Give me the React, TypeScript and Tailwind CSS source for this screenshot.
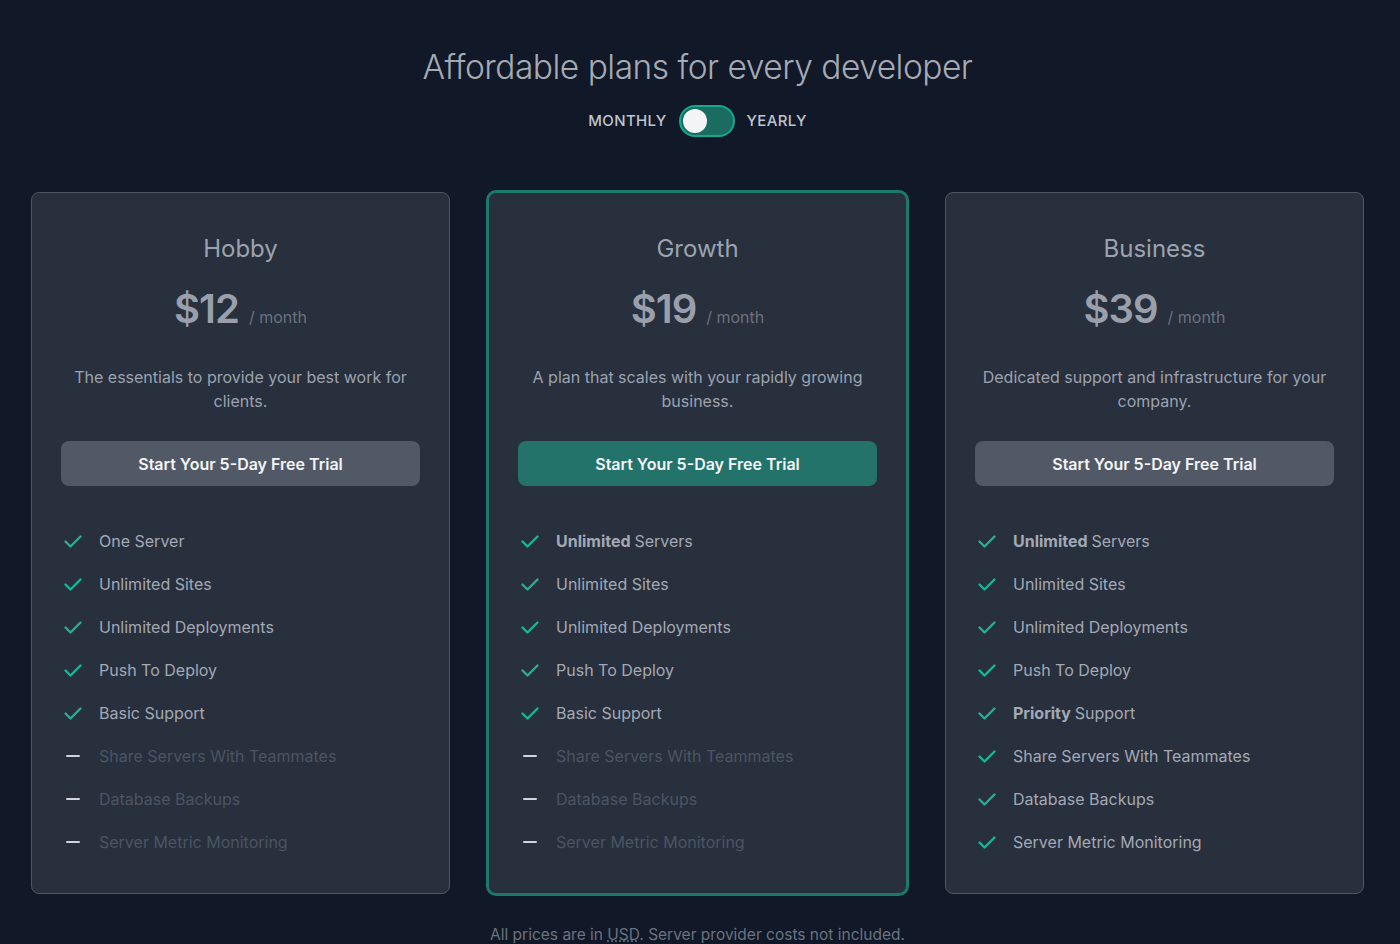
import React, { useState } from 'react';

type Feature = {
  bold?: string;
  text: string;
  included: boolean;
};

type Plan = {
  name: string;
  price: string;
  description: string;
  featured?: boolean;
  features: Feature[];
};

const plans: Plan[] = [
  {
    name: 'Hobby',
    price: '$12',
    description: 'The essentials to provide your best work for clients.',
    features: [
      { text: 'One Server', included: true },
      { text: 'Unlimited Sites', included: true },
      { text: 'Unlimited Deployments', included: true },
      { text: 'Push To Deploy', included: true },
      { text: 'Basic Support', included: true },
      { text: 'Share Servers With Teammates', included: false },
      { text: 'Database Backups', included: false },
      { text: 'Server Metric Monitoring', included: false },
    ],
  },
  {
    name: 'Growth',
    price: '$19',
    description: 'A plan that scales with your rapidly growing business.',
    featured: true,
    features: [
      { bold: 'Unlimited', text: 'Servers', included: true },
      { text: 'Unlimited Sites', included: true },
      { text: 'Unlimited Deployments', included: true },
      { text: 'Push To Deploy', included: true },
      { text: 'Basic Support', included: true },
      { text: 'Share Servers With Teammates', included: false },
      { text: 'Database Backups', included: false },
      { text: 'Server Metric Monitoring', included: false },
    ],
  },
  {
    name: 'Business',
    price: '$39',
    description: 'Dedicated support and infrastructure for your company.',
    features: [
      { bold: 'Unlimited', text: 'Servers', included: true },
      { text: 'Unlimited Sites', included: true },
      { text: 'Unlimited Deployments', included: true },
      { text: 'Push To Deploy', included: true },
      { bold: 'Priority', text: 'Support', included: true },
      { text: 'Share Servers With Teammates', included: true },
      { text: 'Database Backups', included: true },
      { text: 'Server Metric Monitoring', included: true },
    ],
  },
];

const CheckIcon = () => (
  <svg viewBox="0 0 20 20" className="w-5 h-5 text-[#1db396]" fill="none" stroke="currentColor" strokeWidth={2.4} strokeLinecap="round" strokeLinejoin="round">
    <path d="M2.5 10.5l5 5 10-10" />
  </svg>
);

const DashIcon = () => (
  <svg viewBox="0 0 20 20" className="w-5 h-5 text-[#d1d5db]" fill="none" stroke="currentColor" strokeWidth={2} strokeLinecap="round">
    <path d="M4 10h12" />
  </svg>
);

const PlanCard = ({ plan }: { plan: Plan }) => {
  return (
    <div
      className={`flex flex-col rounded-lg border bg-[#282f3d] px-[29px] pt-10 pb-[39px] ${
        plan.featured ? 'border-[#1c7a6c] ring-2 ring-[#1c7a6c]' : 'border-[#4f5662]'
      }`}
    >
      <h3 className="text-center text-2xl leading-8 text-[#9ca3af]">{plan.name}</h3>
      <div className="mt-5 flex items-baseline justify-center gap-2.5">
        <span className="text-[40px] leading-[48px] font-semibold tracking-tight text-[#9aa0ab]">{plan.price}</span>
        <span className="text-base text-[#6b7280]">/ month</span>
      </div>
      <p className="mt-8 text-center text-base leading-6 text-[#9ca3af]">{plan.description}</p>
      <button
        className={`mt-7 h-[45px] w-full rounded-lg text-base font-semibold text-[#f3f4f6] ${
          plan.featured ? 'bg-[#23736a]' : 'bg-[#525966]'
        }`}
      >
        Start Your 5-Day Free Trial
      </button>
      <ul className="mt-[43px] flex flex-col gap-[19px] pl-[2px]">
        {plan.features.map((f, i) => (
          <li key={i} className="flex items-center gap-4 leading-6">
            {f.included ? <CheckIcon /> : <DashIcon />}
            <span className={f.included ? 'text-[#a3a9b4]' : 'text-[#4b5563]'}>
              {f.bold && <span className="font-bold">{f.bold} </span>}
              {f.text}
            </span>
          </li>
        ))}
      </ul>
    </div>
  );
};

export default function App() {
  const [yearly, setYearly] = useState(false);

  return (
    <div
      className="min-h-screen bg-[#111827] pl-[31px] pr-[36px] pt-[44px] pb-2"
      style={{ fontFamily: 'Inter, "Noto Sans", sans-serif' }}
    >
      <h1 className="text-center text-[33.5px] leading-[46px] font-light text-[#a5abb5] tracking-[-0.5px]">
        Affordable plans for every developer
      </h1>
      <div className="mt-[15px] flex items-center justify-center gap-3">
        <span className="text-[15px] font-medium tracking-wide text-[#c0c5cd]">MONTHLY</span>
        <button
          onClick={() => setYearly(!yearly)}
          className="relative h-8 w-14 rounded-full border-2 border-[#14a88f] bg-[#1a6b60]"
        >
          <span
            className={`absolute top-[2px] h-6 w-6 rounded-full bg-[#f3f4f6] transition-all ${
              yearly ? 'left-[26px]' : 'left-[2px]'
            }`}
          />
        </button>
        <span className="text-[15px] font-medium tracking-wide text-[#c0c5cd]">YEARLY</span>
      </div>
      <div className="mt-[55px] grid grid-cols-3 gap-[38px]">
        {plans.map((p) => (
          <PlanCard key={p.name} plan={p} />
        ))}
      </div>
      <p className="mt-[29px] text-center text-[15.5px] leading-6 text-[#6b7280]">
        All prices are in <abbr title="United States Dollars" className="underline decoration-dotted">USD</abbr>. Server provider costs not included.
      </p>
    </div>
  );
}
